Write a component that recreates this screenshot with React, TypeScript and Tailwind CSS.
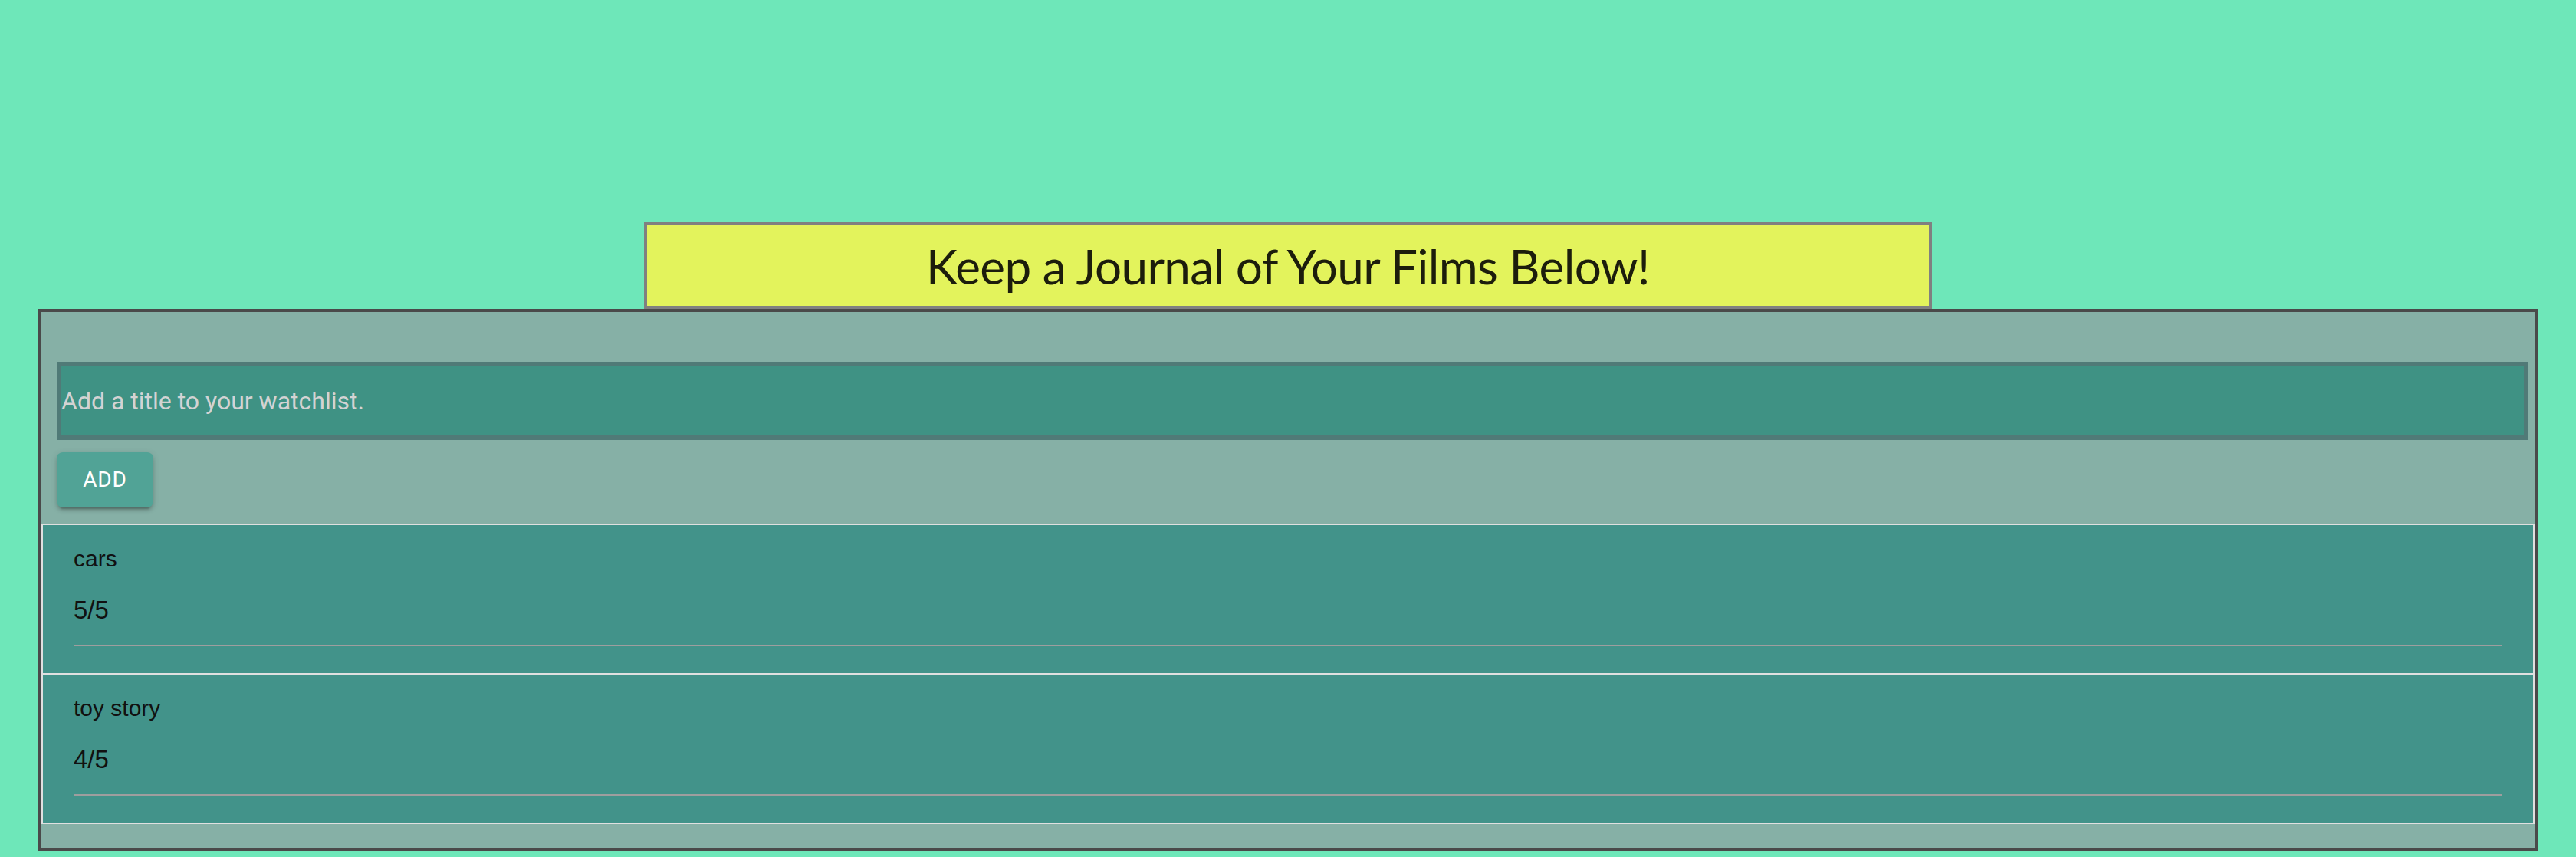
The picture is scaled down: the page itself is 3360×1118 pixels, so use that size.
const films = [
  { title: 'cars', rating: '5/5' },
  { title: 'toy story', rating: '4/5' },
];

export default function App() {
  return (
    <div className="min-h-screen bg-[#6ee7b9] pt-[290px]">
      <div className="mx-auto flex h-[113px] w-1/2 items-center justify-center border-4 border-[#808080] bg-[#e3f35c]">
        <h1 className="font-['Lato',sans-serif] text-[62px] leading-none tracking-[-0.01em] text-[#1c1d0c]">
          Keep a Journal of Your Films Below!
        </h1>
      </div>

      <div className="pl-[50px] pr-[50px]">
        <div className="border-4 border-[#4a4a4a] bg-[#86b0a6] pt-[65px] pb-[31px]">
          <input
            type="text"
            placeholder="Add a title to your watchlist."
            className="ml-[20px] mr-[8px] block h-[102px] w-[calc(100%-28px)] border-[6px] border-[#507a77] bg-[#3f9284] p-0 font-['Roboto',sans-serif] text-[32px] text-white outline-none placeholder:text-[#d3d3d3]"
          />
          <button className="ml-[20px] mt-[16px] h-[72px] min-w-[126px] rounded-[8px] bg-[#51a396] px-[32px] font-['Roboto',sans-serif] text-[28px] font-normal uppercase tracking-[0.8px] text-white shadow-[0_6px_2px_-4px_rgba(0,0,0,0.2),0_4px_4px_0_rgba(0,0,0,0.14),0_2px_10px_0_rgba(0,0,0,0.12)]">
            Add
          </button>

          <ul className="mt-[21px] border-2 border-[#e0e0e0]">
            {films.map((film, i) => (
              <li
                key={film.title}
                className={`bg-[#42938a] pl-[40px] pr-[40px] pt-[21px] pb-[35px] font-['Liberation_Sans',sans-serif] text-[#111] ${
                  i < films.length - 1 ? 'border-b-2 border-[#e0e0e0]' : ''
                }`}
              >
                <div className="text-[30px] leading-[45px]">{film.title}</div>
                <div className="mt-[21px] text-[33px] leading-[48px]">{film.rating}</div>
                <div className="mt-[21px] h-[2px] bg-[#9e9e9e]" />
              </li>
            ))}
          </ul>
        </div>
      </div>
    </div>
  );
}
